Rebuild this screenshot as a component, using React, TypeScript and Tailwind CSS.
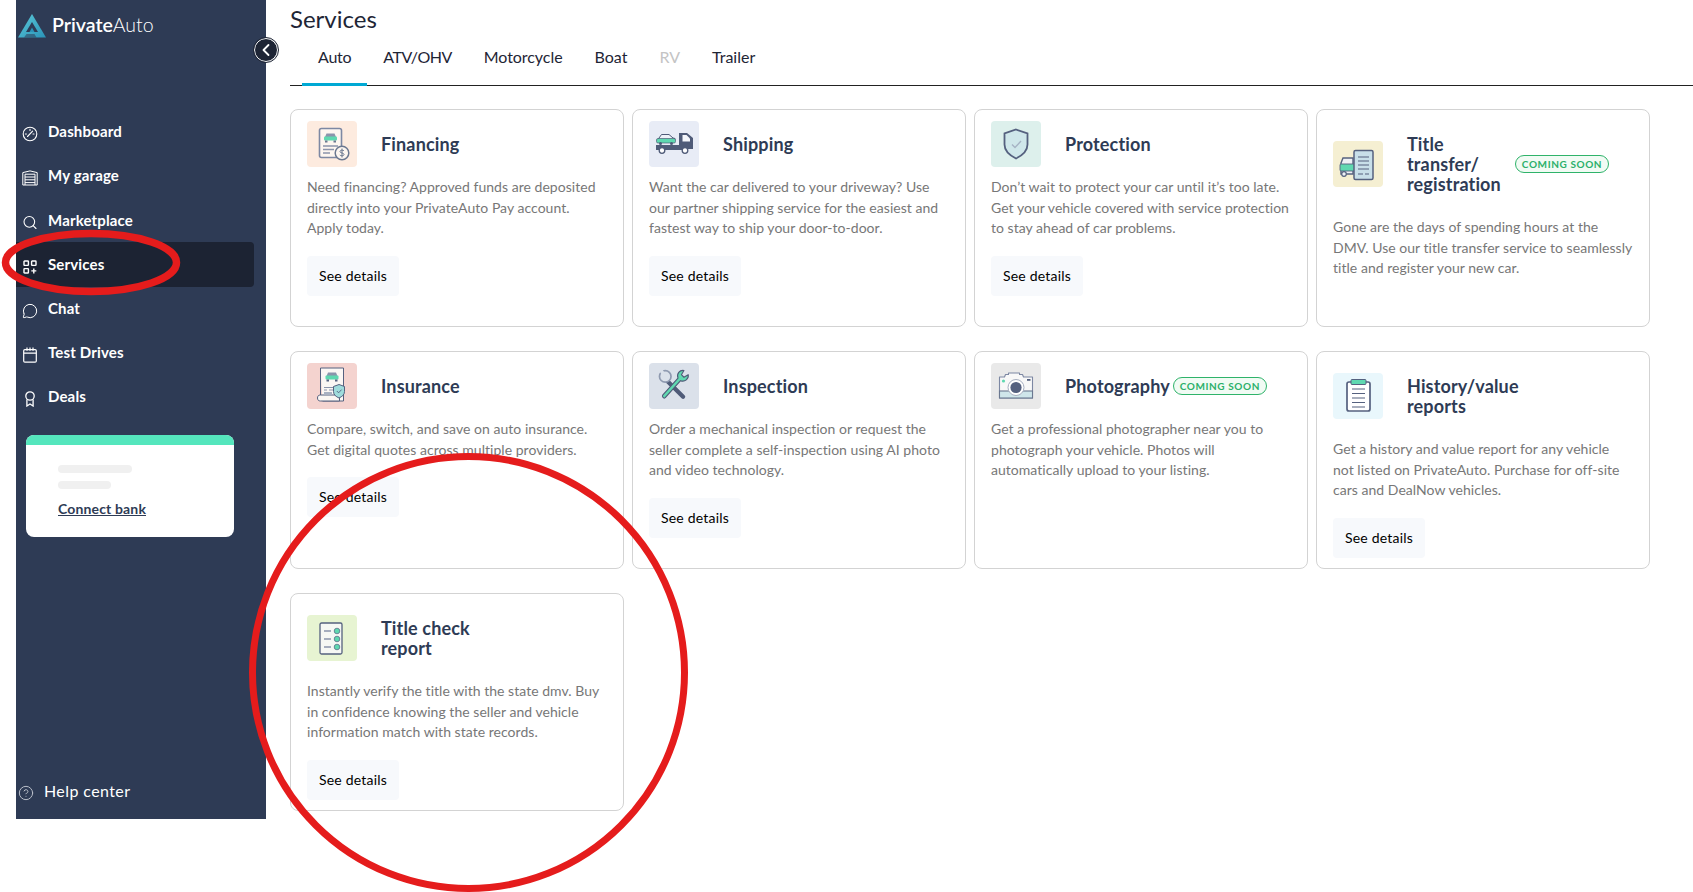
import { Search, MessageCircle, ChevronLeft, CircleHelp } from "lucide-react";
import type { ReactNode } from "react";

const ink = "#55617f";
const teal = "#5fd8b0";

function DashIcon() {
  return (
    <svg width="16" height="16" viewBox="0 0 16 16" fill="none" stroke="white" strokeWidth="1.1">
      <circle cx="8" cy="8" r="6.8" />
      <path d="M5.5 10.5 L10.6 5.2 M8 3.4v1M3.4 8h1M12 8h-1" strokeLinecap="round" />
    </svg>
  );
}

function GarageIcon() {
  return (
    <svg width="16" height="16" viewBox="0 0 16 16" fill="none" stroke="white" strokeWidth="1">
      <path d="M.8 2.6 8 .9l7.2 1.7V15H.8z" />
      <path d="M3 15V4.2h10V15M3 7h10M3 9.8h10M3 12.6h10" />
    </svg>
  );
}

function ServicesIcon() {
  return (
    <svg width="14" height="14" viewBox="0 0 14 14" fill="none" stroke="white" strokeWidth="1.4">
      <rect x="1" y="1" width="4.4" height="4.4" rx=".6" />
      <rect x="8.6" y="1" width="4.4" height="4.4" rx=".6" />
      <rect x="1" y="8.6" width="4.4" height="4.4" rx=".6" />
      <path d="M10.8 8.4v5M8.3 10.9h5" />
    </svg>
  );
}

function CalendarIcon() {
  return (
    <svg width="14" height="16" viewBox="0 0 14 16" fill="none" stroke="white" strokeWidth="1.2">
      <rect x=".7" y="2.6" width="12.6" height="12.6" rx="1.2" />
      <path d="M.7 6.2h12.6M4 .6v3.2M10 .6v3.2M7 .6v3.2" />
    </svg>
  );
}

function AwardIcon() {
  return (
    <svg width="12" height="16" viewBox="0 0 12 16" fill="none" stroke="white" strokeWidth="1.3">
      <circle cx="6" cy="5" r="4.2" />
      <path d="M2.9 8.6v6.4L6 13l3.1 2V8.6" />
    </svg>
  );
}

function Logo() {
  return (
    <svg width="28" height="24" viewBox="0 0 28 24">
      <defs>
        <linearGradient id="logoFill" x1="0" y1="0" x2="1" y2="1">
          <stop offset="0" stopColor="#5cc9d8" />
          <stop offset="1" stopColor="#2a93b8" />
        </linearGradient>
      </defs>
      <path d="M14 0 28 23.500H0z" fill="url(#logoFill)" />
      <path d="M14 8 20 18H8z" fill="#2e3b55" />
      <path d="M14 13.500 16.500 18h-5z" fill="#2a93b8" />
      <path d="M6 23.500 8.500 20h8l2 3.500z" fill="#2e3b55" opacity=".55" />
    </svg>
  );
}

function FinancingArt() {
  return (
    <svg width="50" height="46" viewBox="0 0 50 46" fill="none">
      <rect x="12.500" y="7.500" width="22" height="29" rx="2" fill="#fdf6f0" stroke="#7d88a3" strokeWidth="1.600" />
      <path d="M18 16l1.500-3.500h8l1.500 3.500z" fill="#8b94ab" />
      <rect x="17" y="15.500" width="13" height="4" rx="1" fill={teal} />
      <rect x="18" y="19.500" width="2.500" height="2" fill="#6b7890" />
      <rect x="26.500" y="19.500" width="2.500" height="2" fill="#6b7890" />
      <path d="M16 25h15M16 28.500h11M16 32h7" stroke="#8b94ab" strokeWidth="1.300" />
      <circle cx="35" cy="32" r="6.800" fill="#fdf6f0" stroke="#6b7890" strokeWidth="1.500" />
      <path d="M37 29.800c-.6-.8-3.800-1.200-4 .6-.2 2 4 1.100 4 3.100 0 1.800-3.500 1.500-4.200.5M35 27.500v9" stroke="#6b7890" strokeWidth="1" />
    </svg>
  );
}

function ShippingArt() {
  return (
    <svg width="50" height="46" viewBox="0 0 50 46" fill="none">
      <path d="M30 12h8l6 5v11h-14z" fill="#4f5b78" />
      <path d="M33.500 14h4l3.500 3.500v3h-7.500z" fill="#f4f6fb" />
      <rect x="7" y="24" width="26" height="5" fill="#4f5b78" />
      <path d="M10 17l2.500-3.500h7.500l4 3.500 2 .5v1H9z" fill="#eef1f8" stroke="#4f5b78" strokeWidth="1" />
      <rect x="7.500" y="17.500" width="19" height="4.500" rx="1.500" fill={teal} stroke="#4f5b78" strokeWidth=".7" />
      <circle cx="13" cy="29.500" r="2.800" fill="#fff" stroke="#4f5b78" strokeWidth="1.300" />
      <circle cx="36" cy="29.500" r="2.800" fill="#fff" stroke="#4f5b78" strokeWidth="1.300" />
      <circle cx="11.500" cy="22.500" r="1.500" fill="#4f5b78" />
      <circle cx="22.500" cy="22.500" r="1.500" fill="#4f5b78" />
    </svg>
  );
}

function ProtectionArt() {
  return (
    <svg width="50" height="46" viewBox="0 0 50 46" fill="none">
      <path d="M25 8.500l11.500 4v11c0 7-5.500 11-11.500 14-6-3-11.500-7-11.500-14v-11z" fill="#cfe7ea" stroke={ink} strokeWidth="1.800" />
      <path d="M21 23.500l3 3 6-6.500" stroke="#a6b3c4" strokeWidth="1.400" />
    </svg>
  );
}

function TransferArt() {
  return (
    <svg width="50" height="46" viewBox="0 0 50 46" fill="none">
      <path d="M8 22l2-5h10v16H8z" fill="#eef1f5" stroke={ink} strokeWidth="1.400" />
      <rect x="7" y="23" width="15" height="7" rx="1" fill={teal} stroke={ink} strokeWidth=".9" />
      <circle cx="11" cy="33" r="2.300" fill="#eef1f5" stroke={ink} strokeWidth="1.200" />
      <rect x="21" y="9.500" width="19" height="29" rx="1.500" fill="#c8dfe9" stroke={ink} strokeWidth="1.500" />
      <path d="M25 16h11M25 20h11M25 24h11M25 28h11M25 33h5M32 33h4" stroke={ink} strokeWidth="1.100" />
    </svg>
  );
}

function InsuranceArt() {
  return (
    <svg width="50" height="46" viewBox="0 0 50 46" fill="none">
      <path d="M13.500 5h23v33h-21" fill="#fbf7f4" stroke={ink} strokeWidth="1" />
      <path d="M13.500 5v27" stroke={ink} strokeWidth="1" />
      <path d="M10.500 35c0-2 1-3 3-3h19v6h-19c-2 0-3-1-3-3z" fill="#fbf7f4" stroke={ink} strokeWidth="1" />
      <path d="M21 9.500h8l1.500 3.500h-11z" fill="#8b94ab" />
      <rect x="18.500" y="12.500" width="13" height="4" rx="1" fill={teal} />
      <rect x="19.500" y="16.500" width="2.500" height="2" fill={ink} />
      <rect x="28" y="16.500" width="2.500" height="2" fill={ink} />
      <path d="M17 24.500h9M17 27h3M22 27h4" stroke="#8b94ab" strokeWidth="1.100" />
      <rect x="17" y="29" width="8" height="3" fill="#a9b1c2" />
      <path d="M32 21.500l5.500 2v5c0 3.500-2.500 5-5.500 6.500-3-1.500-5.500-3-5.500-6.500v-5z" fill="#9fdcdc" stroke={ink} strokeWidth="1" />
      <path d="M29.800 28l1.800 1.800 3-3.200" stroke={ink} strokeWidth=".9" />
    </svg>
  );
}

function InspectionArt() {
  return (
    <svg width="50" height="46" viewBox="0 0 50 46" fill="none">
      <g transform="translate(3.500 1.500) scale(.85)">
        <path d="M15 17l21 21" stroke="#4f5b78" strokeWidth="5" strokeLinecap="round" />
        <circle cx="15" cy="14" r="6.800" fill="#dbe1ea" stroke="#8f9ab0" strokeWidth="2" />
        <path d="M15 14l-5-7" stroke="#dbe1ea" strokeWidth="4" />
        <path d="M12 36l18-20c-2-5 2-10 7-9l-3 5 3 3 5-3c1 5-4 9-9 7L15 39c-2 1.500-4-1-3-3z" fill={teal} stroke="#4f5b78" strokeWidth="1.300" strokeLinejoin="round" />
      </g>
    </svg>
  );
}

function CameraArt() {
  return (
    <svg width="50" height="46" viewBox="0 0 50 46" fill="none">
      <path d="M8.500 14h5l1-2.500h3V10h11v1.500h3l1 2.500h9v21h-33z" fill="#f8f8f8" stroke="#7d88a3" strokeWidth="1.100" strokeLinejoin="round" />
      <rect x="8.500" y="28" width="33" height="7" fill="#cfe6ea" stroke="#6b7890" strokeWidth="1.100" />
      <circle cx="25" cy="24.500" r="8" fill="#fff" stroke="#a5adbf" strokeWidth="1" />
      <circle cx="25" cy="24.500" r="5.600" fill="#55617f" />
      <circle cx="12.500" cy="18" r="1.600" fill={teal} />
      <rect x="36" y="16" width="3.500" height="1.800" fill="#55617f" />
    </svg>
  );
}

function HistoryArt() {
  return (
    <svg width="50" height="46" viewBox="0 0 50 46" fill="none">
      <rect x="14" y="9" width="23" height="29" rx="2" fill="#fff" stroke={ink} strokeWidth="1.700" />
      <rect x="18" y="6.500" width="15" height="5" rx="1" fill={teal} stroke={ink} strokeWidth="1" />
      <path d="M19 16h13M19 20.500h13M19 25h13M19 29.500h13M19 34h13" stroke={ink} strokeWidth="1.100" />
    </svg>
  );
}

function CheckArt() {
  return (
    <svg width="50" height="46" viewBox="0 0 50 46" fill="none">
      <rect x="13" y="8" width="22" height="31" rx="1.500" fill="#f6f8f4" stroke={ink} strokeWidth="1.300" />
      <path d="M17 16h7M17 24h7M17 32h7" stroke="#8b94ab" strokeWidth="1.300" />
      <circle cx="30" cy="16" r="2.800" fill={teal} stroke={ink} strokeWidth=".7" />
      <circle cx="30" cy="24" r="2.800" fill={teal} stroke={ink} strokeWidth=".7" />
      <circle cx="30" cy="32" r="2.800" fill={teal} stroke={ink} strokeWidth=".7" />
    </svg>
  );
}

function Soon() {
  return (
    <span className="flex h-[18px] w-[94px] shrink-0 items-center justify-center rounded-full border border-[#2fb36a] bg-[#f1fbf4] text-[10px] font-bold tracking-[0.6px] whitespace-nowrap text-[#2bb06a]">
      COMING SOON
    </span>
  );
}

type Service = {
  title: string;
  tint: string;
  art: ReactNode;
  text: string;
  titleBox?: string;
  soon?: boolean;
  button?: boolean;
};

const services: Service[] = [
  {
    title: "Financing",
    tint: "bg-[#fdebdf]",
    art: <FinancingArt />,
    text: "Need financing? Approved funds are deposited directly into your PrivateAuto Pay account. Apply today.",
    button: true,
  },
  {
    title: "Shipping",
    tint: "bg-[#e8ecf6]",
    art: <ShippingArt />,
    text: "Want the car delivered to your driveway? Use our partner shipping service for the easiest and fastest way to ship your door-to-door.",
    button: true,
  },
  {
    title: "Protection",
    tint: "bg-[#ddf0ec]",
    art: <ProtectionArt />,
    text: "Don’t wait to protect your car until it’s too late. Get your vehicle covered with service protection to stay ahead of car problems.",
    button: true,
  },
  {
    title: "Title\ntransfer/\nregistration",
    tint: "bg-[#f5efd2]",
    art: <TransferArt />,
    text: "Gone are the days of spending hours at the DMV. Use our title transfer service to seamlessly title and register your new car.",
    titleBox: "w-[105px]",
    soon: true,
  },
  {
    title: "Insurance",
    tint: "bg-[#f4d3cf]",
    art: <InsuranceArt />,
    text: "Compare, switch, and save on auto insurance. Get digital quotes across multiple providers.",
    button: true,
  },
  {
    title: "Inspection",
    tint: "bg-[#dbe1ea]",
    art: <InspectionArt />,
    text: "Order a mechanical inspection or request the seller complete a self-inspection using AI photo and video technology.",
    button: true,
  },
  {
    title: "Photography",
    tint: "bg-[#e9e9e9]",
    art: <CameraArt />,
    text: "Get a professional photographer near you to photograph your vehicle. Photos will automatically upload to your listing.",
    soon: true,
  },
  {
    title: "History/value\nreports",
    tint: "bg-[#e9f7fc]",
    art: <HistoryArt />,
    text: "Get a history and value report for any vehicle not listed on PrivateAuto. Purchase for off-site cars and DealNow vehicles.",
    button: true,
  },
  {
    title: "Title check\nreport",
    tint: "bg-[#e7f4d2]",
    art: <CheckArt />,
    text: "Instantly verify the title with the state dmv. Buy in confidence knowing the seller and vehicle information match with state records.",
    button: true,
  },
];

const nav = [
  { label: "Dashboard", icon: <DashIcon /> },
  { label: "My garage", icon: <GarageIcon /> },
  { label: "Marketplace", icon: <Search size={17} color="white" strokeWidth={1.6} /> },
  { label: "Services", icon: <ServicesIcon />, active: true },
  { label: "Chat", icon: <MessageCircle size={16} color="white" strokeWidth={1.5} /> },
  { label: "Test Drives", icon: <CalendarIcon /> },
  { label: "Deals", icon: <AwardIcon /> },
];

const tabs = [
  { label: "Auto", className: "border-[#00a9d4] tracking-[-0.25px] text-[#1e2535]" },
  { label: "ATV/OHV", className: "border-transparent tracking-[-0.5px] text-[#1e2535]" },
  { label: "Motorcycle", className: "border-transparent tracking-[-0.05px] text-[#1e2535]" },
  { label: "Boat", className: "border-transparent text-[#1e2535]" },
  { label: "RV", className: "border-transparent text-[#c4c4c4]" },
  { label: "Trailer", className: "border-transparent text-[#1e2535]" },
];

function Card({ item }: { item: Service }) {
  return (
    <div className="h-[218px] rounded-lg border border-[#d3d3d3] bg-white px-4 pt-[11px]">
      <div className="flex items-center">
        <div className={`flex h-[46px] w-[50px] shrink-0 items-center justify-center rounded ${item.tint}`}>{item.art}</div>
        <h3 className={`ml-6 py-[13px] text-[18px] leading-5 font-bold tracking-[0.15px] whitespace-pre-line text-[#2e3b55] ${item.titleBox ?? ""}`}>
          {item.title}
        </h3>
        {item.soon && (
          <div className="ml-[3px]">
            <Soon />
          </div>
        )}
      </div>
      <p className="mt-[10px] text-[14px] leading-[20.5px] tracking-[0.035px] text-[#777777]">{item.text}</p>
      {item.button && (
        <button className="mt-[17px] h-10 w-[92px] rounded bg-[#f7f9fc] pb-px text-[14px] tracking-[0.2px] text-black">See details</button>
      )}
    </div>
  );
}

export default function App() {
  return (
    <div className="relative h-[892px] w-[1693px] overflow-hidden bg-white pl-4 font-['Lato',sans-serif]">
      <div className="flex">
        {/* sidebar */}
        <aside className="relative flex h-[819px] w-[250px] shrink-0 flex-col bg-[#2e3b55]">
          <div className="flex h-[110px] items-start pt-[14px] pl-[2px]">
            <Logo />
            <span className="ml-[6px] text-[19.5px] leading-[22px] font-semibold text-white">
              Private<span className="font-light">Auto</span>
            </span>
          </div>
          <button className="absolute top-[38px] -right-3 flex h-6 w-6 items-center justify-center rounded-full border-[1.5px] border-white bg-[#1e2535] outline-[1px] outline-[#1e2535]">
            <ChevronLeft size={20} color="white" strokeWidth={2.2} />
          </button>
          <nav className="flex flex-col">
            {nav.map((n) => (
              <div
                key={n.label}
                className={`flex h-[44.17px] w-[238px] items-center rounded-r ${n.active ? "bg-[#1c2333]" : ""}`}
              >
                <span className="mt-1 ml-[6px] flex w-4 justify-center">{n.icon}</span>
                <span className="mb-px ml-[10px] text-[15px] font-bold tracking-[0.15px] text-white">{n.label}</span>
              </div>
            ))}
          </nav>
          <div className="mt-4 ml-[10px] h-[102px] w-[208px] overflow-hidden rounded-lg bg-white">
            <div className="h-[10px] bg-[#55e6bd]" />
            <div className="pt-5 pl-8">
              <div className="h-2 w-[74px] rounded-full bg-[#f0f0f0]" />
              <div className="mt-2 h-2 w-[53px] rounded-full bg-[#f0f0f0]" />
              <div className="mt-[10px] text-[14px] leading-5 font-bold tracking-[0.15px] text-[#2e3b55] underline">Connect bank</div>
            </div>
          </div>
          <div className="mt-auto flex items-center pb-[18px] pl-[2px]">
            <CircleHelp size={16} color="#b9bec9" strokeWidth={1.5} className="mt-1" />
            <span className="ml-[10px] text-[16px] leading-5 tracking-[0.4px] text-white">Help center</span>
          </div>
        </aside>

        {/* main */}
        <main className="min-w-0 flex-1 pl-6">
          <h1 className="pt-1 text-[24px] leading-[30px] text-[#1e2535]">Services</h1>
          <div className="flex h-[52px] items-end border-b border-[#222222] pl-3">
            {tabs.map((t) => (
              <div
                key={t.label}
                className={`-mb-px flex h-[52px] items-center border-b-[3px] px-4 pb-[3px] text-[16px] ${t.className}`}
              >
                {t.label}
              </div>
            ))}
          </div>
          <div className="mt-[23px] grid grid-cols-[repeat(4,334px)] gap-x-2 gap-y-6">
            {services.map((s) => (
              <Card key={s.title} item={s} />
            ))}
          </div>
        </main>
      </div>

      {/* hand-drawn red annotations */}
      <svg className="pointer-events-none absolute inset-0" width="1693" height="892" fill="none" stroke="#e51c1c">
        <ellipse cx="91" cy="262.500" rx="85.500" ry="29" strokeWidth="7.500" />
        <circle cx="468.500" cy="672.500" r="216" strokeWidth="7" />
      </svg>
    </div>
  );
}
